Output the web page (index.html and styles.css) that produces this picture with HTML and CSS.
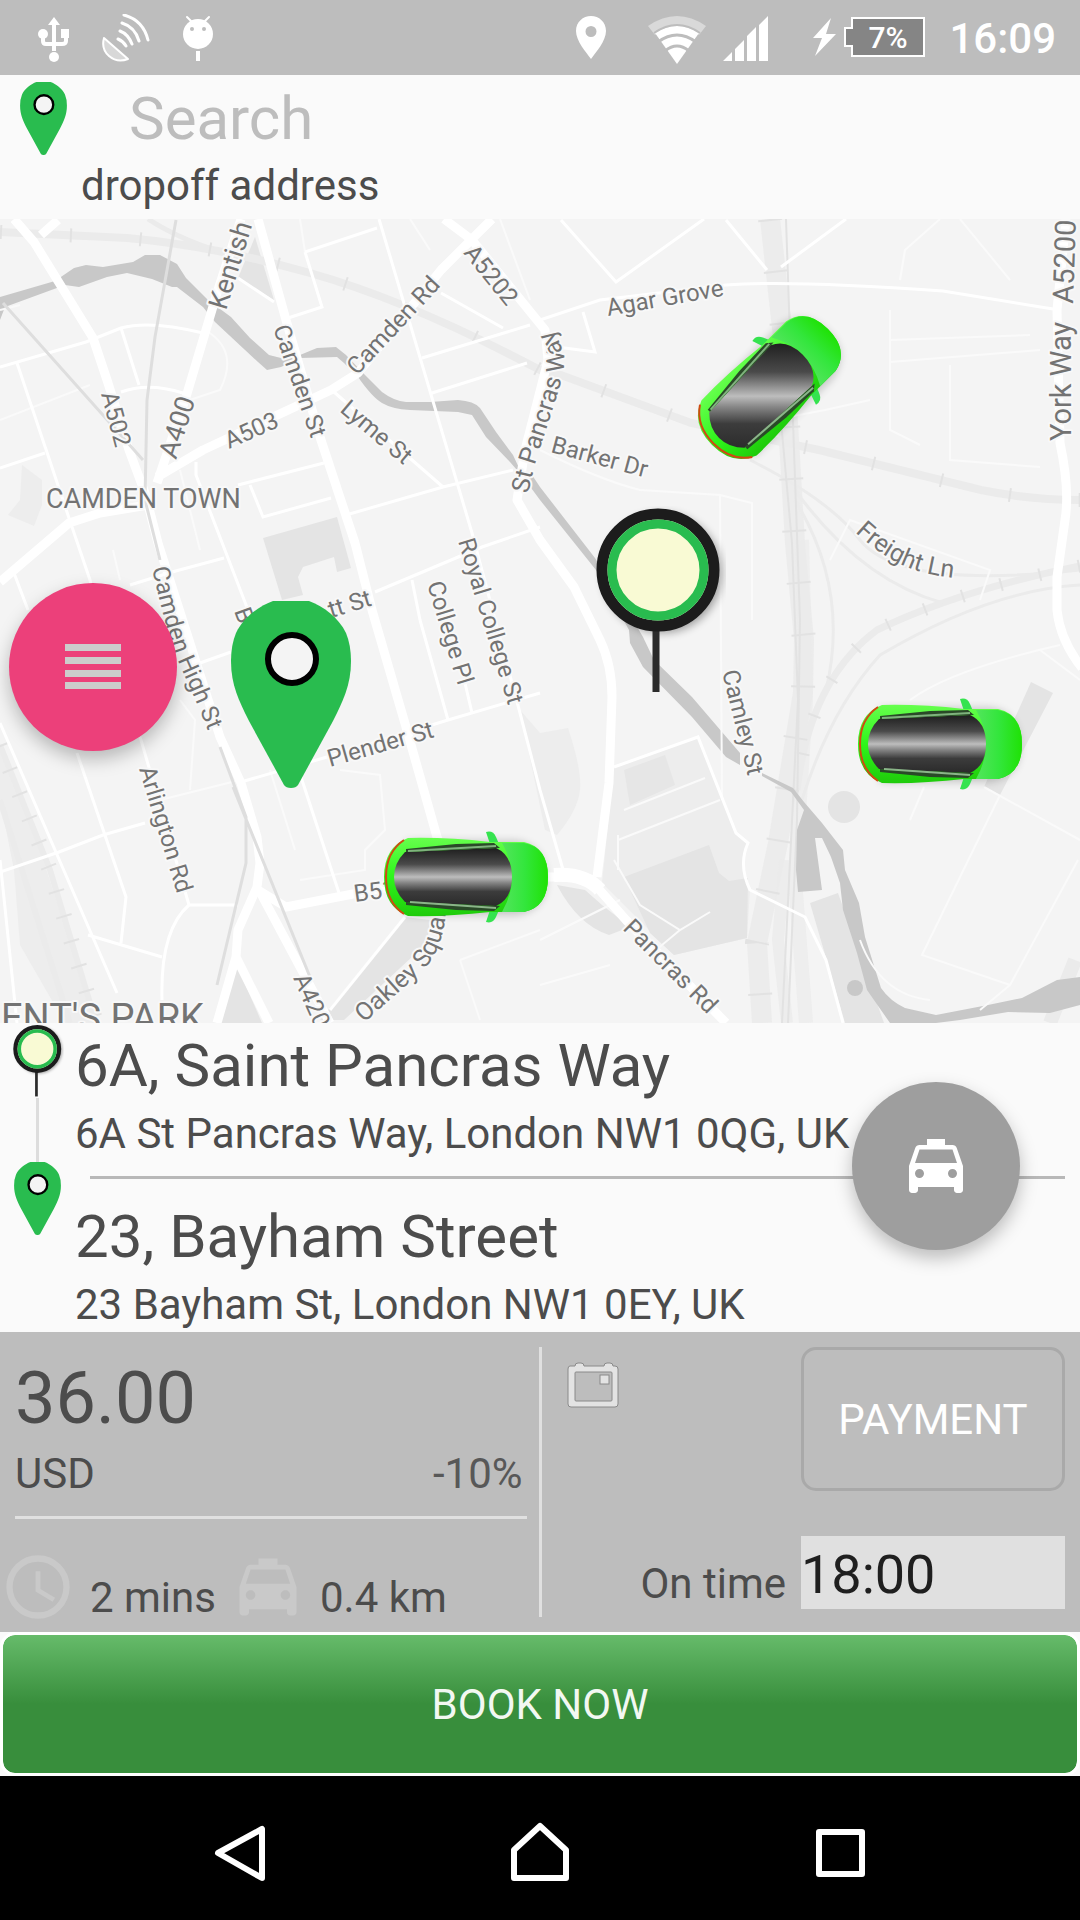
FILE: index.html
```html
<!DOCTYPE html>
<html lang="en">
<head>
    <meta charset="utf-8">
    <title>Book a taxi</title>
    <meta name="viewport" content="width=device-width, initial-scale=1.0">
    <link rel="stylesheet" href="styles.css">
</head>
<body>
    <!-- shared icons -->
    <svg class="defs" width="0" height="0" aria-hidden="true">
        <defs>
            <symbol id="dropPin" viewBox="0 0 120 187">
                <path d="M42 0H78C92 5 108 17 115 32Q120 44 120 60C120 84 112 100 102 120L67 184Q65 187 60 187Q55 187 53 184L18 120C8 100 0 84 0 60Q0 44 5 32C12 17 28 5 42 0Z" fill="#29bc4f"/>
                <circle cx="61" cy="58" r="24" fill="#f4f4f4" stroke="#000" stroke-width="6"/>
            </symbol>
            <symbol id="pickupPin" viewBox="0 0 132 190">
                <path d="M66 122V187" stroke="#000" stroke-width="20" opacity=".14" filter="url(#soft)"/>
                <circle cx="68" cy="67" r="60" fill="#000" opacity=".35" filter="url(#soft)"/>
                <path d="M62 122V186" stroke="#2b2b2b" stroke-width="7"/>
                <circle cx="64" cy="64" r="56" fill="#f9fad4" stroke="#1c1c1c" stroke-width="11"/>
                <circle cx="64" cy="64" r="46" fill="none" stroke="#29bc4f" stroke-width="9"/>
            </symbol>
            <symbol id="taxi" viewBox="0 0 24 24">
                <path d="M18.92 6.01C18.72 5.42 18.16 5 17.5 5H15V3H9v2H6.5c-.66 0-1.21.42-1.42 1.01L3 12v8c0 .55.45 1 1 1h1c.55 0 1-.45 1-1v-1h12v1c0 .55.45 1 1 1h1c.55 0 1-.45 1-1v-8l-2.08-5.99zM6.5 16c-.83 0-1.5-.67-1.5-1.5S5.67 13 6.5 13s1.5.67 1.5 1.5S7.33 16 6.5 16zm11 0c-.83 0-1.5-.67-1.5-1.5s.67-1.5 1.5-1.5 1.5.67 1.5 1.5-.67 1.5-1.5 1.5zM5 11l1.5-4.5h11L19 11H5z" fill="currentColor"/>
            </symbol>
            <linearGradient id="carBody" x1="0" y1="0" x2="0" y2="1">
                <stop offset="0" stop-color="#66ff4d"/>
                <stop offset=".5" stop-color="#2ff51b"/>
                <stop offset="1" stop-color="#1fcb0b"/>
            </linearGradient>
            <linearGradient id="carHood" x1="0" y1="0" x2="1" y2="0">
                <stop offset="0" stop-color="#52e55c"/>
                <stop offset=".5" stop-color="#33e63c"/>
                <stop offset="1" stop-color="#1fe205"/>
            </linearGradient>
            <linearGradient id="carGlass" x1="0" y1="0" x2="0" y2="1">
                <stop offset="0" stop-color="#1d1d1d"/>
                <stop offset=".28" stop-color="#4a4a4a"/>
                <stop offset=".5" stop-color="#bdbdbd"/>
                <stop offset=".6" stop-color="#858585"/>
                <stop offset=".75" stop-color="#3c3c3c"/>
                <stop offset="1" stop-color="#2a2a2a"/>
            </linearGradient>
            <linearGradient id="carGlassTurned" href="#carGlass" gradientUnits="userSpaceOnUse" x1="26" y1="-39" x2="-52" y2="39"/>
            <filter id="soft" x="-50%" y="-50%" width="200%" height="200%"><feGaussianBlur stdDeviation="4"/></filter>
            <path id="glass" d="M-61 -25L30 -29Q46 -22 46 0T30 29L-61 25Q-72 14 -72 0T-61 -25Z"/>
            <g id="carShell">
                <path d="M-60 -36H50Q78 -32 80 0T50 38H-60Z" fill="#000" opacity=".2" filter="url(#soft)"/>
                <path d="M20 -45Q27 -47 30 -40L33 -33H24Z" fill="#35e34f"/>
                <path d="M20 45Q27 47 30 40L33 33H24Z" fill="#35e34f"/>
                <path d="M-58 -39Q-20 -40 24 -35H58Q82 -30 82 0T58 35H24Q-20 40 -58 39Q-82 30 -82 0T-58 -39Z" fill="url(#carBody)"/>
                <path d="M36 -34H58Q82 -30 82 0T58 35H36Q56 0 36 -34Z" fill="url(#carHood)"/>
                <path d="M-62 -37Q-80 -25 -80 0T-62 37" fill="none" stroke="#cf4a12" stroke-width="2"/>
            </g>
            <g id="carWindows">
                <path d="M-60 -28L-10 -33L28 -34L34 -29L-60 -25Z" fill="#2a4a28"/>
                <path d="M-58 -26L30 -31" stroke="#7fb37d" stroke-width="2"/>
                <path d="M-60 25L34 29L28 34L-10 33L-60 28Z" fill="#2a4a28"/>
                <path d="M-56 25L30 31" stroke="#8ab588" stroke-width="2"/>
            </g>
            <g id="car">
                <use href="#carShell"/>
                <use href="#glass" fill="url(#carGlass)"/>
                <use href="#carWindows"/>
            </g>
            <g id="carTurned">
                <use href="#carShell"/>
                <use href="#glass" fill="url(#carGlassTurned)"/>
                <use href="#carWindows"/>
            </g>
        </defs>
    </svg>

    <div class="status-bar">
        <svg class="status-icon" viewBox="0 0 48 48" fill="#fff">
            <path d="M18 11L24 3l6 8h-4v26h-4V11z"/>
            <circle cx="24" cy="43" r="5"/>
            <circle cx="13" cy="20" r="5"/>
            <path d="M31 15h8v9h-8z"/>
            <path d="M13 20v7q0 3 3 3h16q4 0 4-3v-7" fill="none" stroke="#fff" stroke-width="4"/>
        </svg>
        <svg class="status-icon" viewBox="0 0 48 48" fill="none" stroke="#fff" stroke-linecap="round">
            <path d="M2 24Q-1 35 7 42T26 45Z" fill="#d8d8d8" stroke-width="2" stroke-linejoin="round"/>
            <path d="M22 1Q41 6 46 26M20 9Q33 13 37 27M18 17Q26 20 30 30M16 25Q21 27 24 32" stroke-width="3"/>
        </svg>
        <svg class="status-icon" viewBox="0 0 48 48" fill="#fff">
            <path d="M13 3l6 6M35 3l-6 6" stroke="#fff" stroke-width="2" stroke-linecap="round"/>
            <circle cx="24" cy="20" r="15"/>
            <path d="M22 37h4v10h-4z"/>
            <circle cx="18" cy="15" r="2" fill="#bdbdbd"/>
            <circle cx="30" cy="15" r="2" fill="#bdbdbd"/>
        </svg>
        <div class="status-right">
            <svg class="status-icon" viewBox="0 0 48 48">
                <path d="M24 2C16 2 9 8 9 17c0 10 10 21 15 28 5-7 15-18 15-28C39 8 32 2 24 2zm0 10a5 5 0 110 11 5 5 0 010-11z" fill="#fff" fill-rule="evenodd"/>
            </svg>
            <svg class="wifi-icon" viewBox="0 0 60 48">
                <path d="M1 12Q30 -8 59 12L52 21Q30 6 8 21Z" fill="#d9d9d9"/>
                <path d="M30 50L8 19Q30 5 52 19Z" fill="#fff"/>
                <path d="M11 28Q30 14 49 28M18 37Q30 27 42 37" fill="none" stroke="#bdbdbd" stroke-width="3"/>
                <path d="M7 19Q30 3 53 19" fill="none" stroke="#bdbdbd" stroke-width="2"/>
            </svg>
            <svg class="status-icon" viewBox="0 0 48 48" fill="#fff">
                <path d="M2 47l9-9v9zM14 35l9-9v21h-9zM26 22l9-9v34h-9zM38 11l9-9v45h-9z"/>
            </svg>
            <svg class="battery-icon" viewBox="0 0 112 48">
                <path d="M18 4L0 24h9L2 42 23 20H13z" fill="#fff"/>
                <path d="M39 4h72v38H39V32h-7V14h7z" fill="#858585" stroke="#fff" stroke-width="2"/>
                <text class="battery-text" x="75" y="34" text-anchor="middle">7%</text>
            </svg>
            <span class="clock">16:09</span>
        </div>
    </div>

    <div class="search">
        <svg class="drop-icon"><use href="#dropPin"/></svg>
        <div class="search-text">
            <input class="search-input" id="search" type="text" placeholder="Search">
            <label class="small-text" for="search">dropoff address</label>
        </div>
    </div>

    <div class="map">
        <svg class="map-canvas" viewBox="0 219 1080 804">
            <!-- parks and buildings -->
            <g fill="#e4e4e4">
                <path d="M255 237L274 300L238 278Z"/>
                <path d="M263 538L337 517L351 568L337 572L334 557L303 567L298 577L303 595L282 600Z"/>
                <path d="M236 963L219 1023H262Z"/>
                <path d="M405 917L430 920L427 943L344 1020H320Z"/>
                <path d="M557 885L585 890L602 905L630 927L609 935Q578 925 557 885Z"/>
                <path d="M810 903L838 893L884 1023H845Z"/>
                <path d="M1031 682L1053 693L1000 795L984 787Z"/>
                <circle cx="844" cy="807" r="16"/>
            </g>
            <g fill="#ededed">
                <path d="M614 767L698 737L736 833L748 843L743 863L750 890L747 938L674 955L602 883Z"/>
                <path d="M520 710L540 733L568 728Q582 770 580 790T557 835L545 830Z"/>
                <path d="M22 465L42 480V505L34 526L8 515L20 500Z"/>
                <path d="M0 743L40 850L96 1023H65L20 945L14 870L0 800Z"/>
            </g>
            <path d="M624 877L709 845L719 873L729 881L748 878L747 938L674 955L650 933Z" fill="#e4e4e4"/>
            <path d="M624 770L665 755L675 785L630 805Z" fill="#e6e6e6"/>

            <!-- railways -->
            <g fill="none" stroke="#ebebeb">
                <path stroke-width="8" d="M0 232L127 238Q210 245 310 273T540 370L561 375L691 423L819 450L981 490Q1030 500 1080 500"/>
                <path stroke-width="20" d="M770 219L783 337L795 543L804 640L803 693L778 843L757 943L762 1023" opacity=".9"/>
                <path stroke-width="14" d="M802 540L806 700L795 880L806 1023" opacity=".7"/>
                <path stroke-width="12" d="M785 860L778 940L787 1023" opacity=".8"/>
                <path stroke-width="7" d="M1080 566Q960 590 877 630Q810 680 797 790"/>
                <path stroke-width="3" d="M1080 585Q990 590 880 655Q830 710 802 800"/>
                <path stroke-width="3" d="M750 460Q830 500 860 540Q900 590 1080 570"/>
                <path stroke-width="3" d="M795 490Q860 580 943 603M795 500Q850 590 826 690"/>
                <path stroke-width="6" d="M0 745L50 870L96 1023M0 800L70 1023"/>
                <path stroke-width="5" d="M148 219Q180 240 230 255"/>
                <path stroke-width="14" d="M1050 1023L1075 960"/>
            </g>
            <!-- sleepers -->
            <g fill="none" stroke="#e2e2e2">
                <path stroke-width="14" stroke-dasharray="2 68" d="M0 232L127 238Q210 245 310 273T540 370L561 375L691 423L819 450L981 490Q1030 500 1080 500"/>
                <path stroke-width="24" stroke-dasharray="2 50" d="M770 219L783 337L795 543L804 640L803 693L778 843L757 943L762 1023"/>
                <path stroke-width="13" stroke-dasharray="2 38" d="M1080 566Q960 590 877 630Q810 680 797 790"/>
                <path stroke-width="16" stroke-dasharray="2 24" d="M0 745L50 870L96 1023"/>
                <path stroke-width="2" d="M786 219L790 337L800 620L797 820L788 1023M774 343L792 543L798 700L782 1023"/>
            </g>

            <!-- canal -->
            <g fill="#c8c8c8">
                <path d="M0 297L55 281L74 268L86 265L103 267L133 262L145 255H160L177 264L186 278L208 300L231 317L250 338L269 355L281 358L300 355L317 348L336 347L346 355L365 375L382 392Q394 401 406 402H430L458 400Q474 401 480 408L496 432L513 455L520 470L532 475L540 487L595 558L633 620L643 637L654 660L692 697L740 753V765L726 757L692 717L643 667L630 643L629 630L596 570L540 500L523 477L510 462L486 437L472 415L458 412L410 410Q392 409 382 403T358 377L344 363L337 357L300 358L281 367L267 370L258 362L215 322L203 307L177 287H172L152 279L127 273L107 277L79 287L65 285L5 307L0 320Z"/>
                <path d="M762 773L793 788L804 802L822 823L843 850L845 870L859 903L865 937L881 988Q890 1001 905 1008L936 1015L988 1005L1022 998L1057 980L1080 977V1005L1050 1013L1008 1012L960 1020L936 1023H890L867 990L857 953L843 910L840 883L831 857L822 838H815L822 890L798 892L796 870L797 830L804 810L791 792L762 776Z"/>
                <circle cx="855" cy="988" r="8"/>
            </g>

            <!-- side streets -->
            <g fill="none" stroke="#fafafa" stroke-width="2">
                <path d="M540 450Q600 480 640 490L720 495L722 800M720 495L752 503V620M890 310V430L920 445M890 340L1030 335M890 362L1040 350M950 365V460L1040 467M720 430L825 410L870 400M900 280L905 250L940 219M960 219L1010 280M830 560L850 520L990 570L980 600"/>
                <path d="M910 700Q950 670 1060 645M1040 650L1080 680M1000 795L922 955L1010 985L1078 860M1010 985L980 1010M860 940Q880 995 930 1000M984 787L1080 840M924 787L910 820"/>
                <path d="M624 810L705 778M618 840L720 800M614 860L640 905L680 930L710 912M680 930L650 955M618 835V870M540 940L620 900M540 985L610 965"/>
                <path d="M0 420L90 385M160 800L240 780M180 700L195 720L190 790M270 770L295 850M340 770L380 775L385 830L365 850V870L300 880M460 960L540 930M460 960L480 1020"/>
                <path d="M300 219L305 252M410 219L430 250M500 219L530 300M0 310L20 305M205 330Q240 350 220 390L190 400M180 470L200 550M113 550L120 580"/>
            </g>
            <g fill="none" stroke="#fff" stroke-width="3">
                <path d="M0 367L86 342L121 328Q150 320 203 333M121 328L139 385M121 392Q148 382 183 393M17 363L72 527L90 580L103 640L141 740L189 905H238"/>
                <path d="M0 468L45 453M196 462V475L248 610L301 777L339 893M238 485L324 463M250 485L263 517L331 498M346 515L443 487L513 470M334 392L443 487"/>
                <path d="M379 219L472 533L520 713L540 790L564 873M305 252L377 228M305 252L322 307L288 318M238 278L274 302M441 293L503 328M422 358L530 325M432 393L527 363"/>
                <path d="M540 527L482 547L375 592M130 585L172 572L224 558M14 573L28 610M0 872L59 852L103 835L145 823M241 782L327 757L448 720L540 693"/>
                <path d="M0 723L55 850L117 993M77 753L126 897L121 943M88 935L162 957M189 905Q160 930 162 1000M200 663L231 652M420 620L448 720M465 683L472 713M0 860L17 1023M412 580L420 620"/>
                <path d="M540 320L600 300L726 285Q790 280 943 291L1053 309M561 220L616 282L704 219M726 220L767 270M846 219L781 267M583 312L595 352L557 347"/>
                <path d="M614 767L698 737L736 833L748 843Q738 865 750 890L805 917L826 960L843 1023"/>
                <path d="M405 917L330 1010"/>
            </g>

            <!-- main roads -->
            <g fill="none" stroke="#fff" stroke-width="9" stroke-linejoin="round">
                <path d="M14 219L34 242L93 338L108 383L129 450L145 493L158 543L220 737L241 783L257 837L260 863L257 887L238 930L236 957L269 1023M236 957L217 1023"/>
                <path d="M58 220L41 235M241 219L217 293L186 397L157 483M157 477L203 450L331 390L358 373L441 270L492 219"/>
                <path d="M444 219L472 240L545 330L548 360L525 450L517 500L540 540L574 587L600 640Q612 665 612 697L609 783L597 877"/>
                <path d="M258 219L286 320L320 437L355 543L372 610L406 727L437 837L450 870"/>
                <path d="M258 890L286 907L389 887L540 877L578 877L597 887L626 920L726 1023M260 892L330 1023"/>
                <path d="M0 582L69 523L100 513L148 505M1066 219L1057 310L1060 443Q1070 490 1065 520L1057 577V610Q1060 640 1082 668"/>
            </g>
            <path d="M554 875Q585 873 600 890" fill="none" stroke="#fff" stroke-width="14"/>

            <!-- underground lines -->
            <g fill="none" stroke="#dedede" stroke-width="3">
                <path d="M176 220L155 337L147 400L145 500L160 560M3 303L143 460M220 747L246 817V863L217 985M233 787L310 977"/>
            </g>

            <!-- street names -->
            <g class="street">
                <path id="pancrasWay" d="M528 494L535 464Q546 430 554 405Q565 374 564 357Q562 340 542 318" stroke="none" fill="none"/>
                <path id="freightLn" d="M855 532Q885 560 915 570Q940 578 970 579" stroke="none" fill="none"/>
                <path id="oakley" d="M364 1023L420 973Q452 945 445 875" stroke="none" fill="none"/>
                <path id="highSt" d="M152 568Q168 640 182 670T218 755" stroke="none" fill="none"/>
                <text transform="translate(101 394) rotate(75)">A502</text>
                <text transform="translate(229 449) rotate(-24)">A503</text>
                <text transform="translate(273 328) rotate(71)">Camden St</text>
                <text transform="translate(357 376) rotate(-47)">Camden Rd</text>
                <text transform="translate(463 253) rotate(51)">A5202</text>
                <text transform="translate(339 411) rotate(40)">Lyme St</text>
                <text class="street-wide"><textPath href="#pancrasWay">St Pancras Way</textPath></text>
                <text transform="translate(550 452) rotate(15)">Barker Dr</text>
                <text transform="translate(608 316) rotate(-10)">Agar Grove</text>
                <text class="street-wide"><textPath href="#freightLn">Freight Ln</textPath></text>
                <text transform="translate(458 541) rotate(73)">Royal College St</text>
                <text transform="translate(427 584) rotate(73)">College Pl</text>
                <text><textPath href="#highSt">Camden High St</textPath></text>
                <text transform="translate(234 611) rotate(70)">B</text>
                <text transform="translate(331 618) rotate(-17)">tt St</text>
                <text transform="translate(330 767) rotate(-16)">Plender St</text>
                <text transform="translate(139 769) rotate(73)">Arlington Rd</text>
                <text transform="translate(355 902) rotate(-8)">B512</text>
                <text class="street-wide"><textPath href="#oakley">Oakley Square</textPath></text>
                <text transform="translate(293 978) rotate(66)">A4200</text>
                <text transform="translate(722 672) rotate(76)">Camley St</text>
                <text transform="translate(622 929) rotate(45)">Pancras Rd</text>
            </g>
            <g class="street street-big">
                <text transform="translate(226 311) rotate(-73)">Kentish</text>
                <text transform="translate(176 460) rotate(-72)">A400</text>
                <text x="46" y="508">CAMDEN TOWN</text>
            </g>
            <g class="street york-way">
                <text transform="translate(1071 441) rotate(-90)">York Way</text>
                <text transform="translate(1073 304) rotate(-88)">A5200</text>
            </g>
            <text class="street park-name" x="1" y="1031">ENT'S PARK</text>

            <!-- cars -->
            <use href="#carTurned" transform="translate(770 387) rotate(-45)"/>
            <use href="#car" transform="translate(940 744)"/>
            <use href="#car" transform="translate(466 877)"/>

            <!-- pickup and dropoff -->
            <use href="#pickupPin" x="594" y="506" width="132" height="190"/>
            <use href="#dropPin" x="231" y="601" width="120" height="187"/>
        </svg>
        <button class="fab menu-btn" type="button" aria-label="Menu">
            <svg class="menu-icon" viewBox="0 0 56 46" fill="#ccc">
                <path d="M0 0h56v7H0zM0 13h56v7H0zM0 26h56v7H0zM0 38h56v7H0z"/>
            </svg>
        </button>
    </div>

    <div class="route">
        <div class="route-pins">
            <svg class="pickup-icon"><use href="#pickupPin"/></svg>
            <div class="route-line"></div>
            <svg class="drop-icon"><use href="#dropPin"/></svg>
        </div>
        <div class="route-stops">
            <div class="title">6A, Saint Pancras Way</div>
            <div class="small-text">6A St Pancras Way, London NW1 0QG, UK</div>
            <div class="route-divider"></div>
            <div class="title">23, Bayham Street</div>
            <div class="small-text">23 Bayham St, London NW1 0EY, UK</div>
        </div>
        <button class="fab taxi-btn" type="button" aria-label="Choose taxi">
            <svg class="taxi-icon"><use href="#taxi"/></svg>
        </button>
    </div>

    <div class="panel">
        <div class="fare">
            <div class="price">36.00</div>
            <div class="fare-row small-text">
                <span>USD</span>
                <span class="discount">-10%</span>
            </div>
            <div class="fare-divider"></div>
            <div class="trip small-text">
                <svg class="trip-icon" viewBox="0 0 24 24" fill="none" stroke="currentColor">
                    <circle cx="12" cy="12" r="9" stroke-width="2"/>
                    <path d="M12 7v6l5 3" stroke-width="1.5"/>
                </svg>
                <span>2 mins</span>
                <svg class="trip-icon"><use href="#taxi"/></svg>
                <span>0.4 km</span>
            </div>
        </div>
        <div class="panel-divider"></div>
        <div class="options">
            <button class="calendar-btn" type="button" aria-label="Pick a date">
                <svg class="calendar-icon" viewBox="0 0 52 46" fill="#e3e3e3" stroke="#8a8a8a">
                    <path d="M3 4h5q0-3 3-3h3q3 0 3 3h20q0-3 3-3h3q3 0 3 3h2q3 0 3 3v35q0 3-3 3H4q-3 0-3-3V7q0-3 2-3z"/>
                    <rect x="8" y="10" width="37" height="29" rx="1" fill="#bdbdbd"/>
                    <rect x="33" y="13" width="9" height="9"/>
                </svg>
            </button>
            <button class="payment-btn" type="button">PAYMENT</button>
            <label class="small-text" for="time">On time</label>
            <input class="time-input" id="time" type="text" value="18:00">
        </div>
    </div>

    <button class="book-btn" type="button">BOOK NOW</button>

    <div class="nav-bar">
        <button class="nav-btn" type="button" aria-label="Back">
            <svg class="nav-icon" viewBox="0 0 60 60"><path d="M52 7v49L8 31z"/></svg>
        </button>
        <button class="nav-btn" type="button" aria-label="Home">
            <svg class="nav-icon" viewBox="0 0 60 60"><path d="M30 4L4 28v28h52V28z"/></svg>
        </button>
        <button class="nav-btn" type="button" aria-label="Recent apps">
            <svg class="nav-icon" viewBox="0 0 60 60"><path d="M9 10h43v42H9z"/></svg>
        </button>
    </div>
</body>
</html>
```
FILE: styles.css
```css
* {
    box-sizing: border-box;
}
body {
    font-family: Roboto, "Liberation Sans", sans-serif;
    margin: 0;
    background-color: #fafafa;
    color: #4c4c4c;
}
svg {
    display: block;
}
button, input {
    font-family: inherit;
    border: none;
    padding: 0;
    margin: 0;
    border-radius: 0;
}
button {
    cursor: pointer;
}
.defs {
    position: absolute;
}

/* status bar */
.status-bar {
    display: flex;
    align-items: center;
    gap: 24px;
    height: 75px;
    padding: 0 24px 0 30px;
    background-color: #bdbdbd;
}
.status-right {
    display: flex;
    align-items: center;
    margin-left: auto;
}
.status-icon {
    width: 48px;
    height: 48px;
}
.wifi-icon {
    width: 60px;
    height: 48px;
    margin: 0 14px 0 32px;
    overflow: visible;
}
.battery-icon {
    width: 112px;
    height: 48px;
    margin: 0 24px 0 44px;
}
.battery-text {
    font-size: 30px;
    font-weight: 500;
    fill: #fff;
}
.clock {
    font-size: 42px;
    font-weight: 500;
    line-height: 50px;
    padding-top: 2px;
    color: #fff;
}

/* search */
.search {
    display: flex;
    gap: 14px;
    padding: 7px 20px 8px;
}
.search-text {
    flex: 1;
    display: flex;
    flex-direction: column;
    gap: 8px;
    padding-top: 1px;
}
.search-input {
    width: 100%;
    height: 70px;
    padding-left: 48px;
    font-size: 60px;
    background: none;
    color: #4c4c4c;
}
.search-input::placeholder {
    color: #bdbdbd;
}
.small-text {
    font-size: 42px;
    line-height: 50px;
}
.title {
    font-size: 60px;
    line-height: 70px;
    margin-bottom: 8px;
}
.drop-icon {
    width: 47px;
    height: 73px;
}

/* map */
.map {
    position: relative;
    background-color: #f4f4f4;
}
.map-canvas {
    width: 100%;
    height: auto;
}
.street {
    font-size: 24px;
    fill: #737373;
    stroke: #f8f8f8;
    stroke-width: 4px;
    stroke-linejoin: round;
    paint-order: stroke;
}
.street-wide {
    font-size: 25px;
}
.street-big {
    font-size: 27px;
}
.york-way {
    font-size: 29px;
}
.park-name {
    font-size: 38px;
}
.fab {
    position: absolute;
    display: flex;
    align-items: center;
    justify-content: center;
    width: 168px;
    height: 168px;
    border-radius: 50%;
    box-shadow: 0 8px 18px rgba(0, 0, 0, 0.25);
}
.menu-btn {
    left: 9px;
    top: 364px;
    background-color: #ec407a;
}
.menu-icon {
    width: 56px;
    height: 46px;
}

/* route */
.route {
    position: relative;
    display: flex;
    padding: 1px 15px 2px 0;
}
.route-pins {
    display: flex;
    flex-direction: column;
    align-items: center;
    width: 75px;
    padding-right: 14px;
    padding-left: 14px;
}
.pickup-icon {
    width: 52px;
    height: 74px;
}
.route-line {
    width: 3px;
    height: 64px;
    background-color: #ddd;
}
.route-stops {
    flex: 1;
    padding-top: 7px;
}
.route-divider {
    height: 3px;
    margin: 17px 0 23px 15px;
    background-color: #b8b8b8;
}
.taxi-btn {
    right: 60px;
    top: 59px;
    background-color: #9e9e9e;
}
.taxi-icon {
    width: 72px;
    height: 72px;
    color: #fff;
}

/* price and options */
.panel {
    display: grid;
    grid-template-columns: 1fr 3px 1fr;
    background-color: #bdbdbd;
}
.fare {
    padding: 25px 12px 7px 0;
}
.price {
    padding-left: 15px;
    font-size: 72px;
    line-height: 84px;
}
.fare-row {
    display: flex;
    justify-content: space-between;
    padding: 8px 4px 0 15px;
}
.discount {
    color: #585858;
}
.fare-divider {
    height: 3px;
    margin: 17px 0 30px 15px;
    background-color: #e0e0e0;
}
.trip {
    display: flex;
    align-items: flex-end;
    gap: 14px;
}
.trip span {
    padding-bottom: 2px;
}
.trip-icon {
    width: 76px;
    height: 76px;
    color: #c9c9c9;
}
.panel-divider {
    margin: 15px 0;
    background-color: #e0e0e0;
}
.options {
    display: grid;
    grid-template-columns: 1fr 264px;
    column-gap: 15px;
    row-gap: 45px;
    align-content: start;
    align-items: end;
    padding: 15px 15px 0 25px;
}
.calendar-btn {
    align-self: start;
    justify-self: start;
    padding-top: 15px;
    background: none;
}
.calendar-icon {
    width: 52px;
    height: 46px;
}
.payment-btn {
    height: 144px;
    border: 3px solid #a9a9a9;
    border-radius: 15px;
    background: none;
    color: #fff;
    font-size: 42px;
}
.options label {
    text-align: right;
}
.time-input {
    width: 100%;
    height: 73px;
    padding-top: 4px;
    background-color: #e0e0e0;
    color: #1f1f1f;
    font-size: 54px;
}
.book-btn {
    display: block;
    width: 100%;
    height: 144px;
    border: 3px solid #fff;
    border-radius: 15px;
    background: linear-gradient(#66bb6a, #388e3c 50%, #388e3c);
    background-clip: padding-box;
    color: #f2f8f2;
    font-size: 42px;
}

/* navigation bar */
.nav-bar {
    display: flex;
    justify-content: center;
    height: 144px;
    padding-top: 8px;
    background-color: #000;
}
.nav-btn {
    display: flex;
    align-items: center;
    justify-content: center;
    width: 300px;
    background: none;
}
.nav-icon {
    width: 60px;
    height: 60px;
    fill: none;
    stroke: #fff;
    stroke-width: 6px;
    stroke-linejoin: round;
}
```
